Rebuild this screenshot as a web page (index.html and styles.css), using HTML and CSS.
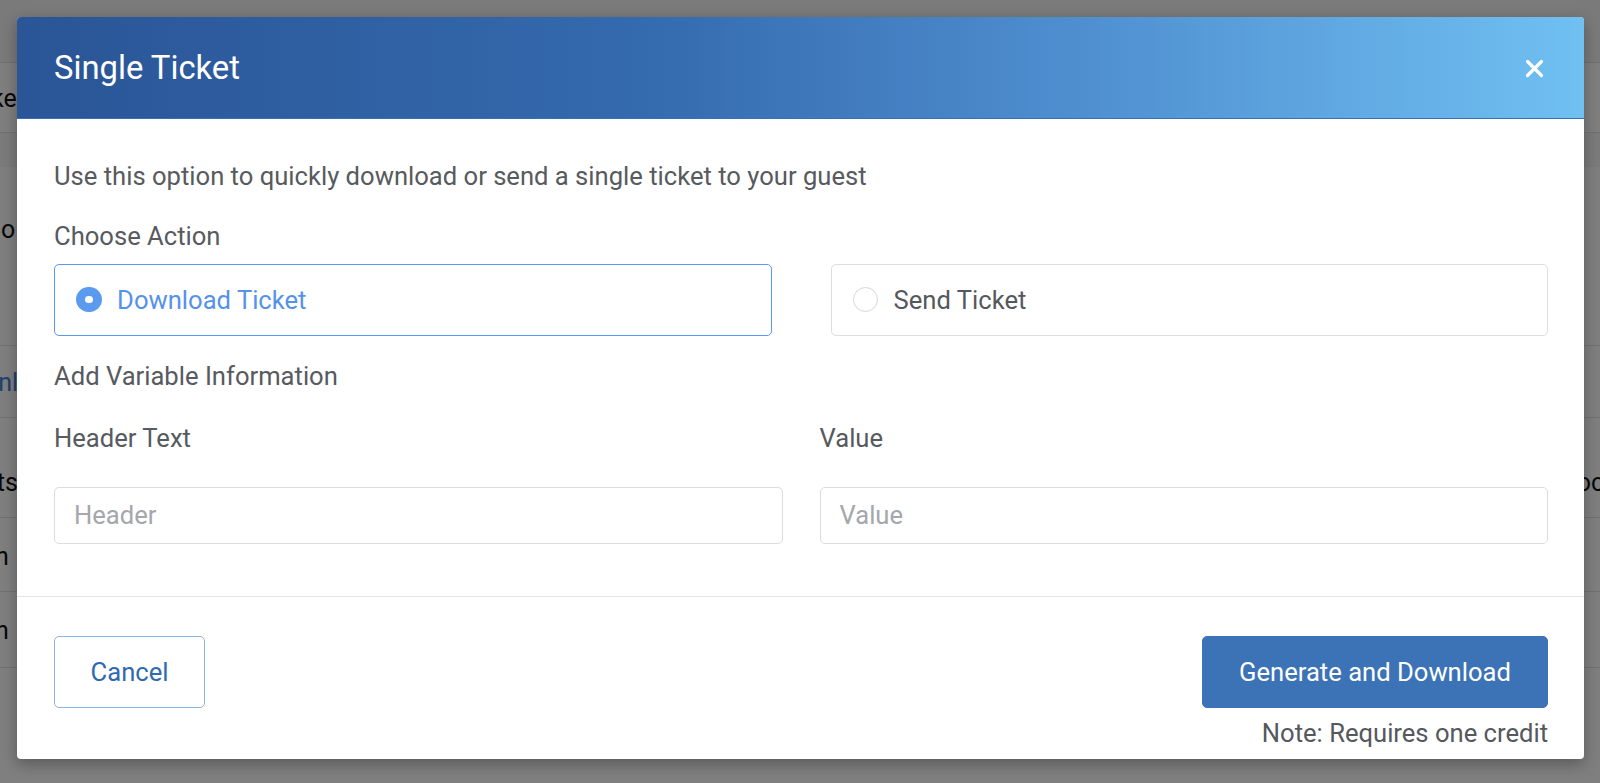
FILE: index.html
```html
<!DOCTYPE html>
<html>
<head>
<meta charset="utf-8">
<link rel="stylesheet" href="styles.css">
</head>
<body>
<div class="page">
  <div class="page-top"></div>
  <div class="row r1"><span class="frag f1">Ticke</span></div>
  <div class="row r2"><span class="frag f2">o</span></div>
  <div class="row r3"><span class="frag f3 link">Unl</span></div>
  <div class="row r4"><span class="frag f4">Lots</span><span class="frag right">Doc</span></div>
  <div class="row r5"><span class="frag f5">Each</span></div>
  <div class="row r6"><span class="frag f5">Each</span></div>
  <div class="row r7"></div>
</div>
<div class="overlay">
  <div class="modal">
    <div class="modal-header">
      <h1 class="modal-title">Single Ticket</h1>
      <svg class="close" width="19" height="19" viewBox="0 0 19 19"><path d="M2.5 2.5 L16.5 16.5 M16.5 2.5 L2.5 16.5" stroke="#fff" stroke-width="3.2" stroke-linecap="round"/></svg>
    </div>
    <div class="modal-body">
      <p class="intro">Use this option to quickly download or send a single ticket to your guest</p>
      <div class="label">Choose Action</div>
      <div class="choices">
        <div class="choice selected"><span class="radio"></span><span>Download Ticket</span></div>
        <div class="choice"><span class="radio"></span><span>Send Ticket</span></div>
      </div>
      <div class="label add">Add Variable Information</div>
      <div class="fields">
        <div class="field">
          <div class="flabel">Header Text</div>
          <div class="input"><span class="ph">Header</span></div>
        </div>
        <div class="field">
          <div class="flabel">Value</div>
          <div class="input"><span class="ph">Value</span></div>
        </div>
      </div>
    </div>
    <div class="modal-footer">
      <button class="btn cancel">Cancel</button>
      <div class="right-col">
        <button class="btn primary">Generate and Download</button>
        <div class="note">Note: Requires one credit</div>
      </div>
    </div>
  </div>
</div>
</body>
</html>
```
FILE: styles.css
```css
* { box-sizing: border-box; }
html, body { margin: 0; padding: 0; }
body {
  width: 1600px;
  height: 783px;
  overflow: hidden;
  position: relative;
  font-family: Roboto, "Liberation Sans", sans-serif;
  background: #fff;
}
.page { width: 1600px; }
.page-top { height: 63px; background: #f4f4f4; border-bottom: 1px solid #e2e2e2; }
.row {
  border-bottom: 1px solid #e2e2e2;
  font-size: 25px;
  color: #111;
  display: flex;
  align-items: flex-start;
  white-space: nowrap;
}
.frag.right { margin-left: auto; margin-right: -4px; }
.frag.link { color: #3c82dc; }
.r1 { height: 70px; padding-top: 21px; }
.f1 { margin-left: -43px; }
.r2 { height: 213px; padding-top: 82px; background: linear-gradient(#f7f7f7 0, #f7f7f7 34px, #fff 34px); }
.f2 { margin-left: 1px; }
.r3 { height: 72px; padding-top: 22px; }
.f3 { margin-left: -18px; }
.r4 { height: 100px; padding-top: 50px; }
.f4 { margin-left: -31px; }
.r5 { height: 74px; padding-top: 24px; }
.f5 { margin-left: -46px; }
.r6 { height: 76px; padding-top: 24px; }
.r7 { height: 120px; border-bottom: none; }

.overlay {
  position: absolute;
  inset: 0;
  background: rgba(0,0,0,0.5);
  padding: 17px 16px 0 17px;
}
.modal {
  width: 1567px;
  height: 742px;
  background: #fff;
  border-radius: 4px;
  overflow: hidden;
  box-shadow: 0 5px 15px rgba(0,0,0,0.3);
  display: flex;
  flex-direction: column;
}
.modal-header {
  height: 102px;
  flex: none;
  background: linear-gradient(90deg, #2a5596 0%, #346aae 40%, #4f8fd0 68%, #70c0f2 100%);
  border-bottom: 1px solid #3572b8;
  display: flex;
  align-items: center;
  justify-content: space-between;
  padding: 0 40px 0 37px;
}
.modal-title {
  margin: 0;
  font-weight: 400;
  font-size: 32.8px;
  color: #fff;
}
.close { display: block; margin-top: 2px; }
.modal-body {
  padding: 41.5px 36px 0 37px;
  color: #575a5e;
  font-size: 25.6px;
  height: 478px;
  flex: none;
  border-bottom: 1px solid #e3e4e8;
}
.intro { margin: 0; line-height: 30px; }
.label { margin-top: 30px; line-height: 30px; }
.choices {
  display: flex;
  gap: 59px;
  margin-top: 13px;
}
.choice {
  flex: 1;
  height: 72.4px;
  border: 1.5px solid #dcdde3;
  border-radius: 5px;
  display: flex;
  align-items: center;
  padding-left: 21px;
  gap: 15.5px;
  color: #55585c;
}
.radio {
  width: 25.6px;
  height: 25.6px;
  border-radius: 50%;
  border: 1.5px solid #d6d7de;
  background: #fff;
  flex: none;
}
.choice.selected { border-color: #5a9af0; color: #5592ea; }
.choice.selected .radio {
  border: 9px solid #5b9bef;
  background: #fff;
}
.label.add { margin-top: 25.6px; }
.fields { display: flex; gap: 37px; margin-top: 31.3px; }
.field { flex: 1; }
.flabel { line-height: 30px; }
.input {
  margin-top: 34px;
  height: 57px;
  border: 1.5px solid #dadce2;
  border-radius: 5px;
  display: flex;
  align-items: center;
  padding-left: 19px;
}
.ph { color: #a4a7ab; }
.modal-footer {
  flex: 1;
  display: flex;
  justify-content: space-between;
  align-items: flex-start;
  padding: 39px 36px 0 37px;
}
.btn {
  font-family: Roboto, "Liberation Sans", sans-serif;
  font-size: 25.6px;
  height: 71.5px;
  border-radius: 5px;
  cursor: pointer;
  padding: 0;
}
.cancel {
  width: 151px;
  background: #fff;
  border: 1.5px solid #8fb1db;
  color: #2e6ab3;
}
.right-col { display: flex; flex-direction: column; align-items: flex-end; }
.primary {
  width: 346px;
  background: #3c73b7;
  border: 1px solid #3c73b7;
  color: #fff;
}
.note {
  color: #55585c;
  font-size: 25.6px;
  margin-top: 10.2px;
  line-height: 30px;
}
```
